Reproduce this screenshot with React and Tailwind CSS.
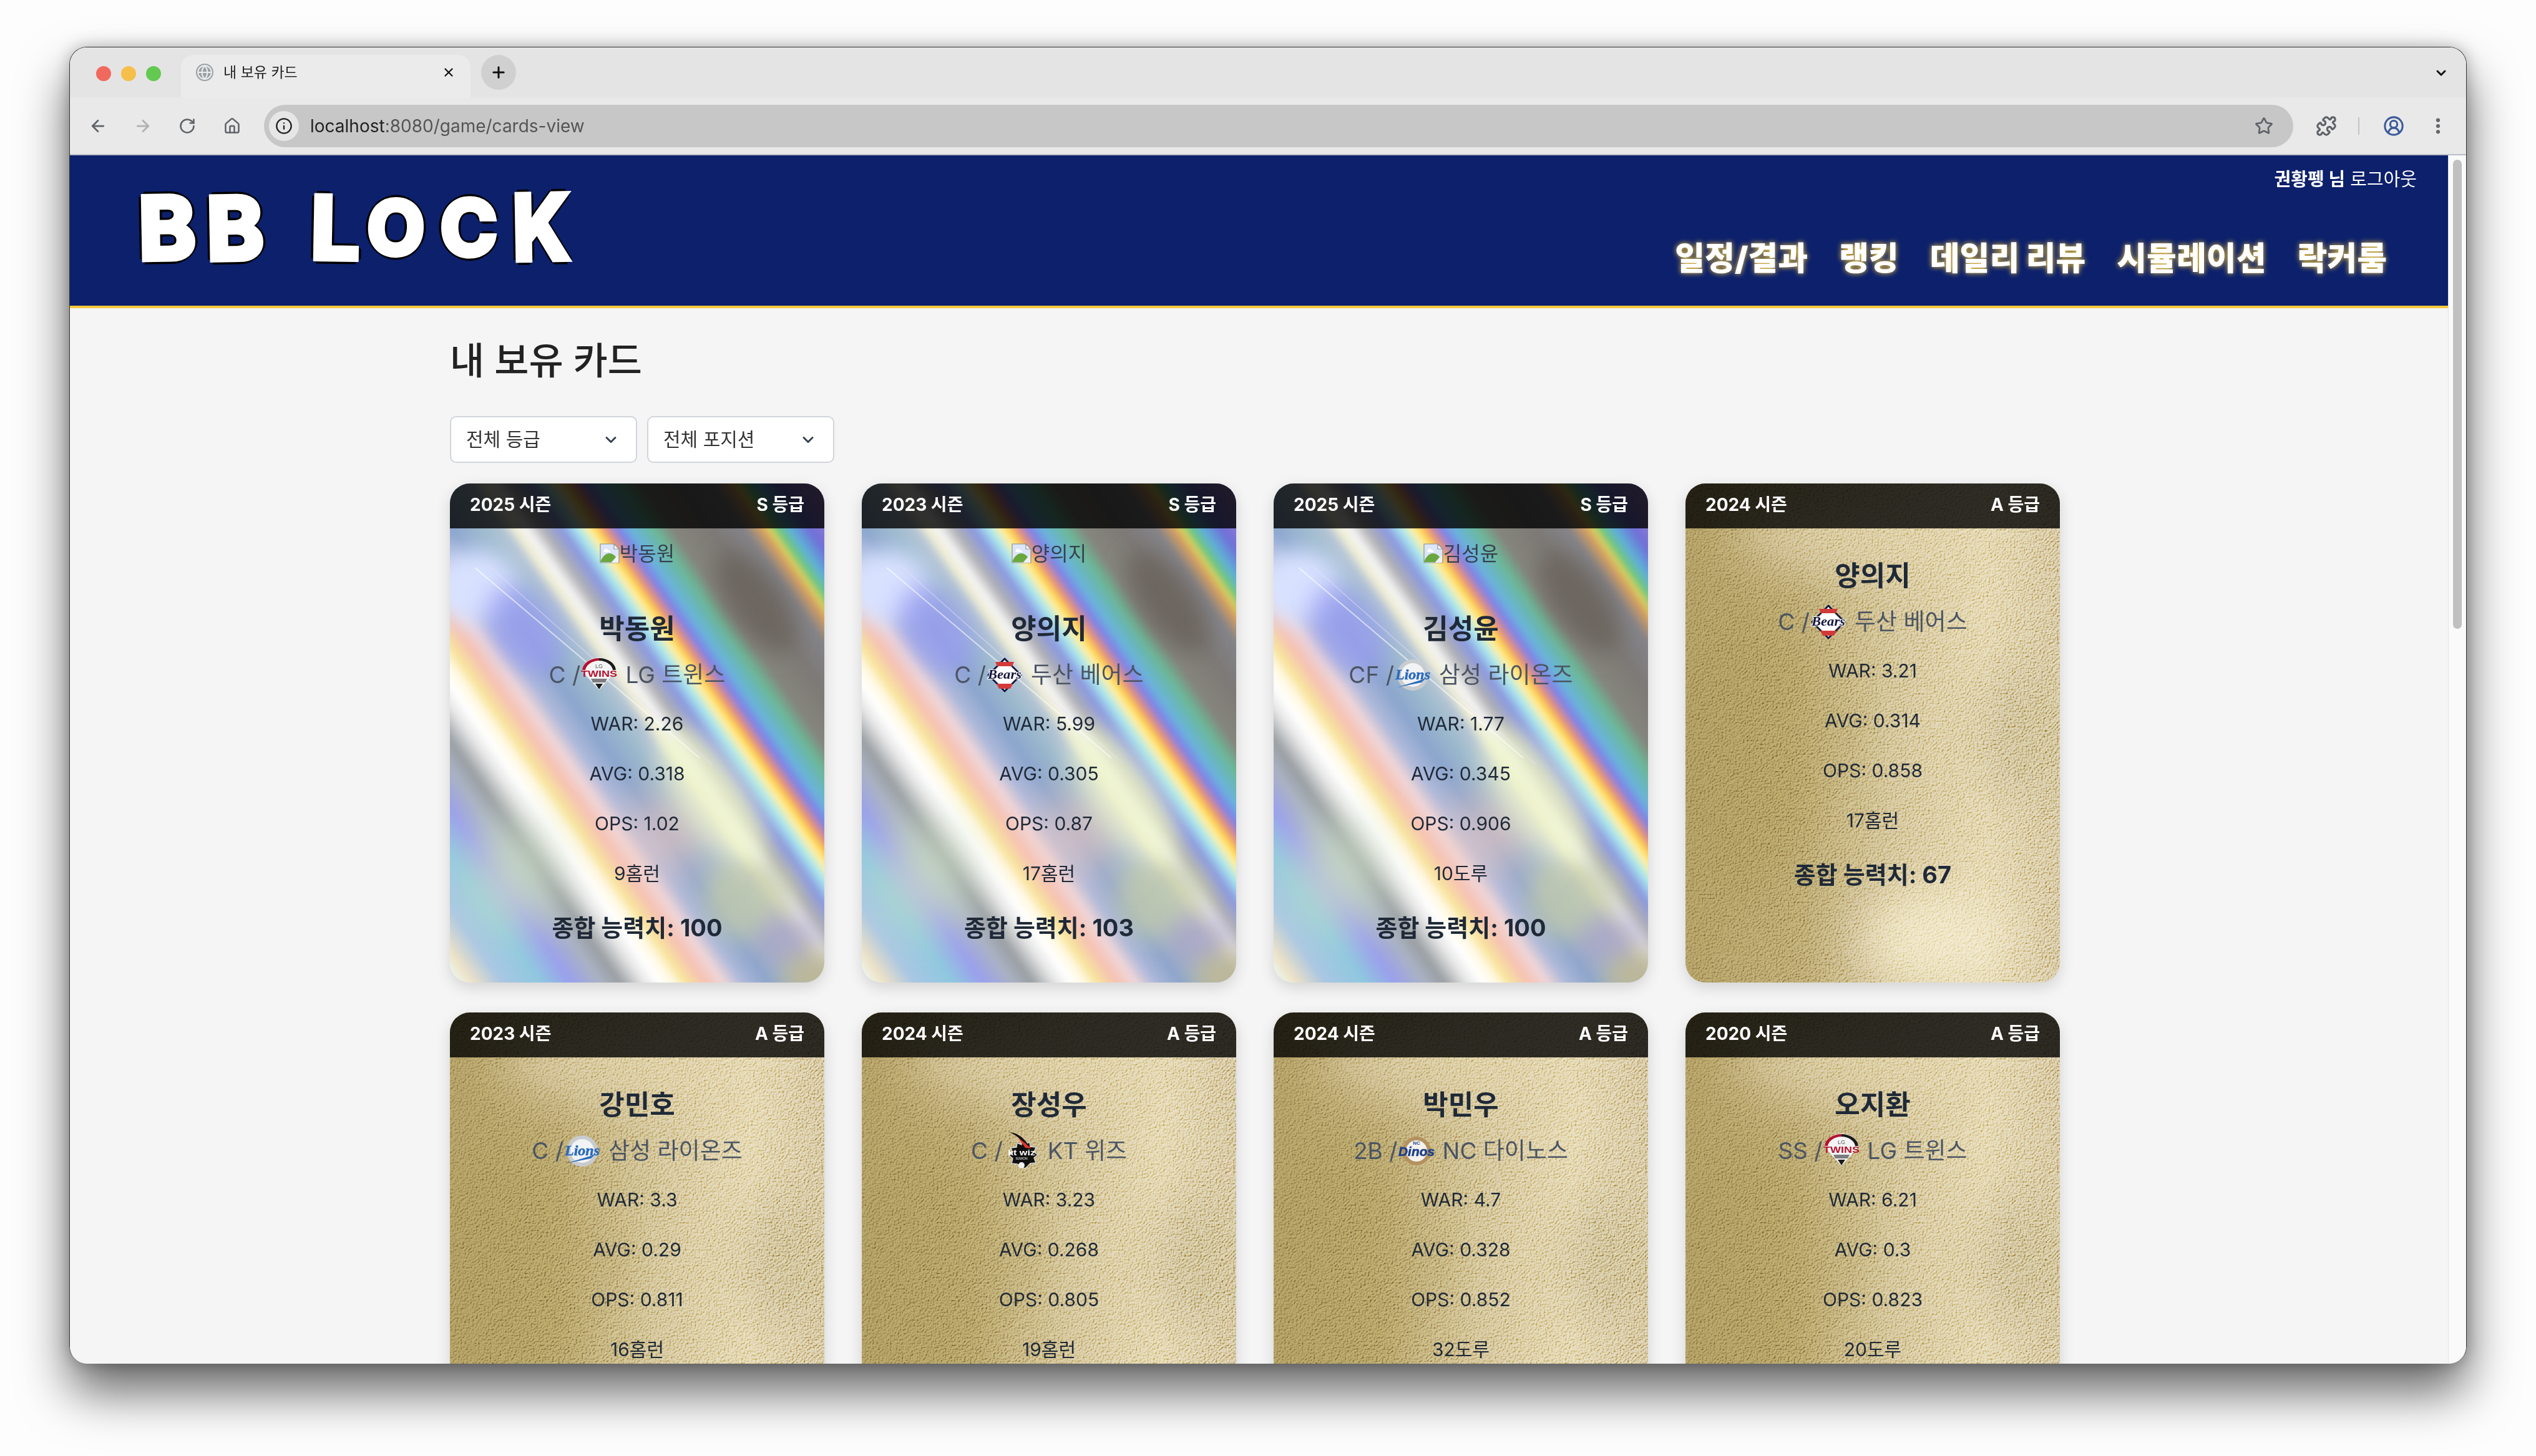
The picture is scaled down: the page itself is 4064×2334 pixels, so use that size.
// App.jsx
import React from 'react';
import { ArrowLeft, ArrowRight, RotateCw, House, Info, Star, Puzzle, CircleUserRound, EllipsisVertical, ChevronDown, Plus, X, Globe } from 'lucide-react';

const CARDS = [
  { season: 2025, grade: 'S', name: '박동원', pos: 'C', team: 'LG 트윈스', logo: 'twins', war: 2.26, avg: 0.318, ops: 1.02, extra: '9홈런', total: 100 },
  { season: 2023, grade: 'S', name: '양의지', pos: 'C', team: '두산 베어스', logo: 'bears', war: 5.99, avg: 0.305, ops: 0.87, extra: '17홈런', total: 103 },
  { season: 2025, grade: 'S', name: '김성윤', pos: 'CF', team: '삼성 라이온즈', logo: 'lions', war: 1.77, avg: 0.345, ops: 0.906, extra: '10도루', total: 100 },
  { season: 2024, grade: 'A', name: '양의지', pos: 'C', team: '두산 베어스', logo: 'bears', war: 3.21, avg: 0.314, ops: 0.858, extra: '17홈런', total: 67 },
  { season: 2023, grade: 'A', name: '강민호', pos: 'C', team: '삼성 라이온즈', logo: 'lions', war: 3.3, avg: 0.29, ops: 0.811, extra: '16홈런', total: 66 },
  { season: 2024, grade: 'A', name: '장성우', pos: 'C', team: 'KT 위즈', logo: 'wiz', war: 3.23, avg: 0.268, ops: 0.805, extra: '19홈런', total: 65 },
  { season: 2024, grade: 'A', name: '박민우', pos: '2B', team: 'NC 다이노스', logo: 'dinos', war: 4.7, avg: 0.328, ops: 0.852, extra: '32도루', total: 68 },
  { season: 2020, grade: 'A', name: '오지환', pos: 'SS', team: 'LG 트윈스', logo: 'twins', war: 6.21, avg: 0.3, ops: 0.823, extra: '20도루', total: 70 },
];

const NAV = ['일정/결과', '랭킹', '데일리 리뷰', '시뮬레이션', '락커룸'];

// stops along the foil, p = .819x - .574y
const HOLO_STOPS = [
  [-459, '#e8ffff'], [-430, '#efe2c6'], [-390, '#a9c6e4'], [-340, '#8fc8e0'], [-300, '#9aa0ec'], [-262, '#aab2c4'],
  [-235, '#9a9fa3'], [-205, '#e6e6e6'], [-185, '#ffffff'], [-165, '#fff8e0'], [-150, '#f8e59c'], [-125, '#f6c2b2'],
  [-100, '#efd6d8'], [-75, '#aeb9da'], [-40, '#8ba5cd'], [0, '#9cb9cd'], [28, '#b4c4d4'], [44, '#f0eed4'],
  [59, '#f4f4f4'], [80, '#b0b0b4'], [105, '#8a98e0'], [125, '#a8e8f0'], [140, '#fff0a8'], [150, '#ffd850'],
  [162, '#e89078'], [178, '#7f80e8'], [195, '#6ab4dc'], [226, '#6cb898'], [250, '#85857c'], [300, '#7d7976'],
  [345, '#84848a'], [368, '#d8a060'], [378, '#d8d060'], [388, '#70c878'], [405, '#5fb0d8'], [430, '#6f6fd8'],
  [470, '#9a80d0'], [491, '#a888c4'],
];

function FoilDefs() {
  return (
    <svg className="absolute w-0 h-0">
      <defs>
        <linearGradient id="holo" gradientUnits="userSpaceOnUse" x1="0" y1="800" x2="778" y2="255">
          {HOLO_STOPS.map(([p, c]) => <stop key={p} offset={(p + 459) / 950} stopColor={c} />)}
        </linearGradient>
        <linearGradient id="goldBase" x1="0" y1="0" x2="1" y2="0">
          <stop offset="0" stopColor="#a8925a" />
          <stop offset="0.3" stopColor="#ae9862" />
          <stop offset="0.55" stopColor="#c8b57e" />
          <stop offset="0.8" stopColor="#dccb98" />
          <stop offset="1" stopColor="#c6b27e" />
        </linearGradient>
        <linearGradient id="grainFade" x1="0" y1="0" x2="1" y2="0">
          <stop offset="0" stopColor="#777" />
          <stop offset="0.5" stopColor="#bbb" />
          <stop offset="1" stopColor="#fff" />
        </linearGradient>
        <mask id="grainMask"><rect width="600" height="800" fill="url(#grainFade)" /></mask>
        <filter id="blur40" x="-50%" y="-50%" width="200%" height="200%"><feGaussianBlur stdDeviation="40" /></filter>
        <filter id="blur18" x="-50%" y="-50%" width="200%" height="200%"><feGaussianBlur stdDeviation="18" /></filter>
        <filter id="blur4" x="-5%" y="-5%" width="110%" height="110%"><feGaussianBlur stdDeviation="4" /></filter>
        <filter id="grain" x="0" y="0" width="100%" height="100%">
          <feTurbulence type="fractalNoise" baseFrequency="0.32" numOctaves="3" seed="7" />
          <feDiffuseLighting surfaceScale="4.2" lightingColor="#fff" diffuseConstant="0.68">
            <feDistantLight azimuth="225" elevation="55" />
          </feDiffuseLighting>
        </filter>
      </defs>
    </svg>
  );
}

function HoloFoil() {
  return (
    <svg viewBox="0 0 600 800" className="absolute inset-0 w-full h-full">
      <rect x="-30" y="-30" width="660" height="860" fill="url(#holo)" filter="url(#blur4)" />
      <ellipse cx="490" cy="190" rx="42" ry="95" transform="rotate(-35 490 190)" fill="#6d6660" filter="url(#blur18)" />
      <ellipse cx="40" cy="165" rx="70" ry="60" fill="#d8e2ff" filter="url(#blur18)" />
      <ellipse cx="120" cy="235" rx="50" ry="80" transform="rotate(-35 120 235)" fill="#9a9cf4" opacity="0.7" filter="url(#blur18)" />
      <ellipse cx="480" cy="665" rx="75" ry="70" fill="#c4cbaa" opacity="0.75" filter="url(#blur18)" />
      <ellipse cx="540" cy="735" rx="55" ry="45" fill="#aaa5c8" opacity="0.8" filter="url(#blur18)" />
      <ellipse cx="590" cy="790" rx="60" ry="40" fill="#bcb79a" filter="url(#blur18)" />
      <ellipse cx="100" cy="630" rx="70" ry="90" fill="#cfe2c4" opacity="0.7" filter="url(#blur40)" />
      <ellipse cx="350" cy="560" rx="70" ry="60" fill="#f6cabc" opacity="0.7" filter="url(#blur40)" />
      <ellipse cx="420" cy="500" rx="50" ry="130" transform="rotate(-35 420 500)" fill="#eef6cc" opacity="0.75" filter="url(#blur18)" />
      <line x1="40" y1="135" x2="400" y2="440" stroke="#fff" strokeWidth="2" opacity="0.6" />
      <line x1="60" y1="130" x2="420" y2="450" stroke="#e8e0ff" strokeWidth="1.5" opacity="0.5" />
    </svg>
  );
}

function GoldFoil() {
  return (
    <svg viewBox="0 0 600 800" className="absolute inset-0 w-full h-full">
      <rect width="600" height="800" fill="url(#goldBase)" />
      <ellipse cx="300" cy="80" rx="220" ry="70" fill="#d8c692" opacity="0.8" filter="url(#blur40)" />
      <ellipse cx="90" cy="430" rx="120" ry="240" fill="#a38d55" opacity="0.8" filter="url(#blur40)" />
      <ellipse cx="530" cy="400" rx="60" ry="110" fill="#b8a672" opacity="0.8" filter="url(#blur40)" />
      <ellipse cx="400" cy="730" rx="120" ry="80" fill="#ecdfb6" filter="url(#blur40)" />
      <ellipse cx="230" cy="400" rx="40" ry="60" fill="#ad9862" opacity="0.7" filter="url(#blur40)" />
      <rect width="600" height="800" filter="url(#grain)" mask="url(#grainMask)" opacity="0.8" className="mix-blend-overlay" />
    </svg>
  );
}

function BrokenImage() {
  return (
    <svg viewBox="0 0 32 32" className="w-8 h-8 shrink-0">
      <path d="M1 1h22l8 8v22H1z" fill="#dce6f8" stroke="#8a9098" strokeWidth="1.2" />
      <path d="M23 1v8h8z" fill="#fff" stroke="#8a9098" strokeWidth="1.2" />
      <path d="M7 12a3 3 0 0 1 6-1 3 3 0 0 1 4 3H6a2 2 0 0 1 1-2z" fill="#fff" />
      <path d="M1 30c3-9 9-14 14-14 5 0 9 3 11 6l-7 8z" fill="#69a83e" />
      <path d="M19 31l11-12v12z" fill="#f1f2f4" />
    </svg>
  );
}

function TeamLogo({ kind }) {
  const cls = 'w-[60px] h-[60px] shrink-0';
  if (kind === 'twins') {
    return (
      <svg viewBox="0 0 60 60" className={cls}>
        <path d="M3 24A27 22 0 0 1 57 24L30 54z" fill="#f4f4f4" />
        <path d="M3 22A27 20 0 0 1 30 3V7A23 17 0 0 0 8 22z" fill="#b4122f" />
        <path d="M57 22A27 20 0 0 0 30 3V7A23 17 0 0 1 52 22z" fill="#1a1a1a" />
        <text x="30" y="19" textAnchor="middle" fontSize="9" fontFamily="Liberation Sans, sans-serif" fill="#555">LG</text>
        <text x="30" y="33" textAnchor="middle" fontSize="15.5" fontWeight="700" textLength="58" lengthAdjust="spacingAndGlyphs" fontFamily="Liberation Sans, sans-serif" fill="#b4122f">TWINS</text>
        <path d="M17 36H43L40 42H20z" fill="#7c7c80" />
        <path d="M24 44H36L30 53z" fill="#1a1a1a" />
      </svg>
    );
  }
  if (kind === 'bears') {
    return (
      <svg viewBox="0 0 60 60" className={cls}>
        <path d="M30 2L58 30L30 58L2 30z" fill="#14163c" />
        <path d="M30 6L54 30L30 54L6 30z" fill="#fff" />
        <path d="M15 9L45 9L42 16H18z" fill="#d23a3a" />
        <path d="M17 44H43L39 52H21z" fill="#d23a3a" />
        <text x="30" y="36" textAnchor="middle" fontSize="21" fontWeight="700" fontStyle="italic" textLength="54" lengthAdjust="spacingAndGlyphs" fontFamily="Liberation Serif, serif" fill="#14163c" stroke="#fff" strokeWidth="2" paintOrder="stroke">Bears</text>
      </svg>
    );
  }
  if (kind === 'lions') {
    return (
      <svg viewBox="0 0 60 60" className={cls}>
        <circle cx="30" cy="30" r="25" fill="#c8ccd0" />
        <circle cx="30" cy="30" r="19" fill="#f2f3f4" />
        <text x="30" y="37" textAnchor="middle" fontSize="24" fontWeight="700" fontStyle="italic" textLength="56" lengthAdjust="spacingAndGlyphs" fontFamily="Liberation Serif, serif" fill="#2a6bbd" stroke="#2a6bbd" strokeWidth="0.5">Lions</text>
        <path d="M4 50L50 36L44 42z" fill="#2a6bbd" />
      </svg>
    );
  }
  if (kind === 'wiz') {
    return (
      <svg viewBox="0 0 60 60" className={cls}>
        <path d="M30 14l6 5 7-3 1 7 9 1-3 8 6 4-6 5 3 8-9 1-6 6-3 2-5-3-7-4-9-1 2-8-6-5 6-4-3-8 9-1 1-7 7 3z" fill="#101010" stroke="#d8d8d8" strokeWidth="1.4" />
        <path d="M10 0C22 1 32 6 42 22L30 14C26 8 18 3 10 0z" fill="#111" />
        <path d="M24 8L46 26L36 25z" fill="#e4332d" />
        <text x="30" y="37" textAnchor="middle" fontSize="13" fontWeight="700" textLength="44" lengthAdjust="spacingAndGlyphs" fontFamily="Liberation Sans, sans-serif" fill="#fff">kt wiz</text>
        <text x="30" y="44" textAnchor="middle" fontSize="5" fontFamily="Liberation Sans, sans-serif" fill="#fff">SUWON</text>
        <circle cx="30" cy="53" r="5" fill="#f2f2f2" />
      </svg>
    );
  }
  return (
    <svg viewBox="0 0 60 60" className={cls}>
      <circle cx="30" cy="30" r="23" fill="#b4915f" />
      <circle cx="30" cy="30" r="17" fill="#f4f2ee" />
      <text x="30" y="38" textAnchor="middle" fontSize="21" fontWeight="700" fontStyle="italic" textLength="58" lengthAdjust="spacingAndGlyphs" fontFamily="Liberation Sans, sans-serif" fill="#1d3f8a" stroke="#1d3f8a" strokeWidth="0.6">Dinos</text>
      <text x="30" y="20" textAnchor="middle" fontSize="8" fontWeight="700" fontFamily="Liberation Sans, sans-serif" fill="#1d3f8a">NC</text>
    </svg>
  );
}

function PlayerCard({ card }) {
  const isS = card.grade === 'S';
  return (
    <div className="relative w-[600px] h-[800px] rounded-[32px] overflow-hidden shadow-[0_8px_24px_rgba(0,0,0,0.14)] text-center">
      {isS ? <HoloFoil /> : <GoldFoil />}
      <div className="relative flex items-center justify-between h-[72px] px-8 pb-1 bg-black/80 text-white text-[28px] font-bold">
        <span>{card.season} 시즌</span>
        <span>{card.grade} 등급</span>
      </div>
      <div className={`relative flex flex-col items-center ${isS ? 'pt-6' : 'pt-11'}`}>
        {isS && (
          <div className="h-[105px] flex items-start justify-center text-[32px] leading-[34px] text-[#374151]">
            <BrokenImage />
            <span>{card.name}</span>
          </div>
        )}
        <h3 className="text-[44px] leading-[64px] font-bold text-[#1f2937]">{card.name}</h3>
        <div className="mt-[18px] flex items-center justify-center h-12 text-[37px] leading-[48px] text-[#4b5563]">
          <span className="whitespace-pre">{card.pos} /</span>
          <TeamLogo kind={card.logo} />
          <span className="ml-3">{card.team}</span>
        </div>
        <div className="mt-[34px] flex flex-col gap-10 text-[30px] leading-10 text-[#1f2937]">
          <p>WAR: {card.war}</p>
          <p>AVG: {card.avg}</p>
          <p>OPS: {card.ops}</p>
          <p>{card.extra}</p>
        </div>
        <p className="mt-[41px] text-[38px] leading-[52px] font-bold text-[#1f2937]">종합 능력치: {card.total}</p>
      </div>
    </div>
  );
}

function FakeSelect({ label }) {
  return (
    <div className="flex items-center justify-between w-[300px] h-[75px] pl-6 pr-[26px] bg-white border-2 border-[#d1d5db] rounded-[10px] text-[30px] text-[#333]">
      <span>{label}</span>
      <ChevronDown size={28} strokeWidth={2.6} className="text-[#374151]" />
    </div>
  );
}

function Logo() {
  const letter = 'inline-block text-white [font-family:\'DejaVu_Sans\',sans-serif] font-bold leading-none [-webkit-text-stroke:9px_#fff] [text-shadow:6px_0_0_#000,-6px_0_0_#000,0_6px_0_#000,0_-6px_0_#000,5px_5px_0_#000,-5px_5px_0_#000,5px_-5px_0_#000,-5px_-5px_0_#000,8px_0_0_#000,-8px_0_0_#000,0_8px_0_#000,0_-8px_0_#000]';
  return (
    <div className="flex items-center h-[115px] mt-[58px] ml-[110px] select-none">
      <span className={`${letter} text-[138px] w-[109px] -rotate-1`}>B</span>
      <span className={`${letter} text-[138px] w-[167px] -rotate-1`}>B</span>
      <span className={`${letter} text-[138px] w-[91px] rotate-1`}>L</span>
      <span className={`${letter} text-[118px] w-[117px] rotate-3`}>O</span>
      <span className={`${letter} text-[122px] w-[115px]`}>C</span>
      <span className={`${letter} text-[144px] w-[100px] -rotate-1 origin-left scale-x-[0.88]`}>K</span>
    </div>
  );
}

function BrowserChrome() {
  return (
    <>
      <div className="flex items-end h-[80px] bg-[#e4e4e4] pl-[42px] relative">
        <div className="flex items-center gap-4 h-[68px] mr-[32px] self-start mt-[8px]">
          <i className="w-6 h-6 rounded-full bg-[#f0695c]" />
          <i className="w-6 h-6 rounded-full bg-[#f6bf4a]" />
          <i className="w-6 h-6 rounded-full bg-[#63c950]" />
        </div>
        <div className="flex items-center w-[464px] h-[68px] rounded-t-[20px] bg-[#ebebeb] pl-6 pr-6 pb-3 text-[23px] text-[#222]">
          <span className="flex items-center justify-center w-[28px] h-[28px] rounded-full bg-[#9aa0a6] mr-4">
            <Globe size={26} className="text-[#ebebeb]" />
          </span>
          <span className="flex-1">내 보유 카드</span>
          <X size={22} strokeWidth={2.4} className="text-[#111]" />
        </div>
        <div className="flex items-center justify-center w-14 h-14 rounded-full bg-[#d0d0d0] ml-[17px] self-start mt-[12px]">
          <Plus size={28} strokeWidth={2.6} className="text-[#111]" />
        </div>
        <ChevronDown size={24} strokeWidth={3} className="absolute right-[28px] top-[29px] text-[#111]" />
      </div>
      <div className="flex items-center h-[93px] bg-[#e9e9e9] border-b-2 border-[#b9bec6] pl-[30px] pr-[29px] text-[#5f6368]">
        <ArrowLeft size={30} strokeWidth={2.2} />
        <ArrowRight size={30} strokeWidth={2.2} className="ml-[42px] text-[#aeb0b3]" />
        <RotateCw size={28} strokeWidth={2.2} className="ml-[42px]" />
        <House size={28} strokeWidth={2.2} className="ml-[44px]" />
        <div className="flex items-center flex-1 h-[68px] ml-[37px] rounded-full bg-[#c7c7c7] pl-2 pr-[32px]">
          <span className="flex items-center justify-center w-12 h-12 rounded-full bg-[#e6e6e6] text-[#222]">
            <Info size={28} strokeWidth={2} />
          </span>
          <span className="ml-[18px] flex-1 text-[28px] text-[#555]"><b className="font-normal text-[#222]">localhost</b>:8080/game/cards-view</span>
          <Star size={30} strokeWidth={2.2} />
        </div>
        <Puzzle size={34} strokeWidth={2.2} className="ml-[36px]" />
        <i className="w-[2px] h-7 bg-[#c4c4c4] ml-[34px]" />
        <CircleUserRound size={34} strokeWidth={2.2} className="ml-[38px] text-[#3b5b9a]" />
        <EllipsisVertical size={32} strokeWidth={2.6} className="ml-[38px]" />
      </div>
    </>
  );
}

export default function App() {
  return (
    <div className="w-[4064px] h-[2334px] overflow-hidden bg-[#fdfdfd] pt-[75px] pl-[111px] [font-family:Inter,'Noto_Sans_CJK_KR',sans-serif]">
      <FoilDefs />
      <div className="flex flex-col w-[3842px] h-[2111px] rounded-[28px] overflow-hidden border-t border-x border-[#333] shadow-[0_45px_80px_rgba(0,0,0,0.6),0_0_24px_rgba(0,0,0,0.25)]">
        <BrowserChrome />
        <div className="flex flex-1 min-h-0">
          <div className="flex-1 min-w-0 h-full overflow-hidden bg-[#f5f5f5]">
            <header className="flex justify-between h-[245px] bg-[#0c206c] border-b-4 border-[#f5c93a]">
              <Logo />
              <div className="flex flex-col items-end">
                <div className="mt-[20px] mr-[50px] text-[29px] leading-[38px] text-white">
                  <b>권황펭 님</b> <span>로그아웃</span>
                </div>
                <nav className="flex gap-[50px] mt-[72px] mr-[98px] text-[52px] leading-[72px] font-black text-white [text-shadow:0_0_9px_#f5c93a]">
                  {NAV.map(item => <span key={item}>{item}</span>)}
                </nav>
              </div>
            </header>
            <main className="pl-[609px]">
              <h1 className="pt-11 text-[60px] leading-[80px] font-medium text-[#222]">내 보유 카드</h1>
              <div className="flex gap-4 mt-[49px]">
                <FakeSelect label="전체 등급" />
                <FakeSelect label="전체 포지션" />
              </div>
              <div className="grid grid-cols-[repeat(4,600px)] gap-x-[60px] gap-y-12 mt-[33px]">
                {CARDS.map((c, i) => <PlayerCard key={i} card={c} />)}
              </div>
            </main>
          </div>
          <div className="w-[29px] bg-[#fafafa] border-l border-[#e5e5e5] pt-[7px] pl-[7px]">
            <div className="w-[14px] h-[752px] rounded-full bg-[#c0c0c0]" />
          </div>
        </div>
      </div>
    </div>
  );
}
